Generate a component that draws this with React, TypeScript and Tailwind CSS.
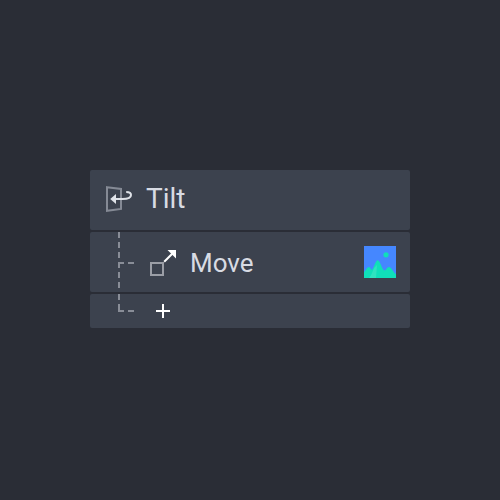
import type { ReactNode } from "react"

function TiltIcon() {
    return (
        <svg width="28" height="28" viewBox="0 0 28 28" fill="none">
            <path d="M2 2.2L16 3.9V23.9L2 25.8Z" stroke="#858a95" strokeWidth="2" />
            <path d="M10 14H17.5C22.5 14 26 12.8 26 10C26 8 24.2 6.9 21.2 6.9" stroke="#dfe2e8" strokeWidth="2" />
            <path d="M5.2 14L11 9V19Z" fill="#dfe2e8" />
        </svg>
    )
}

function MoveIcon() {
    return (
        <svg width="28" height="28" viewBox="0 0 28 28" fill="none">
            <path d="M2 14H14V26H2Z" stroke="#9b9ea6" strokeWidth="2" />
            <path d="M15.2 12.8L24 4" stroke="#fff" strokeWidth="2" />
            <path d="M18.5 1H27V9.5Z" fill="#fff" />
        </svg>
    )
}

function PlusIcon() {
    return (
        <svg width="14" height="14" viewBox="0 0 14 14">
            <path d="M7 0V14M0 7H14" stroke="#fff" strokeWidth="2" />
        </svg>
    )
}

function Thumbnail() {
    return (
        <svg width="32" height="32" viewBox="0 0 32 32">
            <path d="M0 0H32V32H0Z" fill="#4587ff" />
            <circle cx="22" cy="8.8" r="2.6" fill="#10dfb9" />
            <path d="M0 26C1.5 25 3 21 4.8 21C6.5 21 7 24 8 24C9.8 22 11.7 14.3 13.6 14.3C16.3 14.3 18 24.5 20.5 24.5C22 24.5 23 21 25 21C27.5 21 29.5 27 32 28V32H0Z" fill="#10dfb9" />
            <path d="M5 32C8 29 8.5 24.5 10.5 21.5L13 19L12 32Z" fill="#2fe3c0" />
        </svg>
    )
}

// Tree guide running down the left side of the nested rows
function Guide({ height, d }: { height: number; d: string }) {
    return (
        <svg className="self-start shrink-0" width="16" height={height}>
            <path d={d} fill="#898d97" />
        </svg>
    )
}

function Row({ className, children }: { className: string; children: ReactNode }) {
    return <div className={`flex items-center rounded-[2px] bg-[#3c424e] ${className}`}>{children}</div>
}

export default function App() {
    return (
        <div className="flex h-screen w-screen justify-center bg-[#2a2d36] pt-[170px] font-['Roboto',sans-serif] text-[#d8dbe3]">
            <div className="flex w-80 flex-col gap-0.5">
                <Row className="h-15 pb-0.5 pl-[15px]">
                    <TiltIcon />
                    <span className="ml-[13px] text-[28px] leading-8">Tilt</span>
                </Row>
                <Row className="h-15 pr-3.5 pl-7">
                    <Guide
                        height={60}
                        d="M0 0h2v6h-2zM0 10h2v6h-2zM0 20h2v6h-2zM0 30h6v2h-4v4h-2zM10 30h6v2h-6zM0 40h2v6h-2zM0 50h2v6h-2z"
                    />
                    <span className="ml-[15px] pt-0.5">
                        <MoveIcon />
                    </span>
                    <span className="ml-[13px] pt-0.5 text-[26px] leading-8">Move</span>
                    <span className="ml-auto">
                        <Thumbnail />
                    </span>
                </Row>
                <Row className="h-[34px] pl-7">
                    <Guide height={34} d="M0 0h2v6h-2zM0 10h2v6h4v2h-6zM10 16h6v2h-6z" />
                    <span className="ml-[22px]">
                        <PlusIcon />
                    </span>
                </Row>
            </div>
        </div>
    )
}
